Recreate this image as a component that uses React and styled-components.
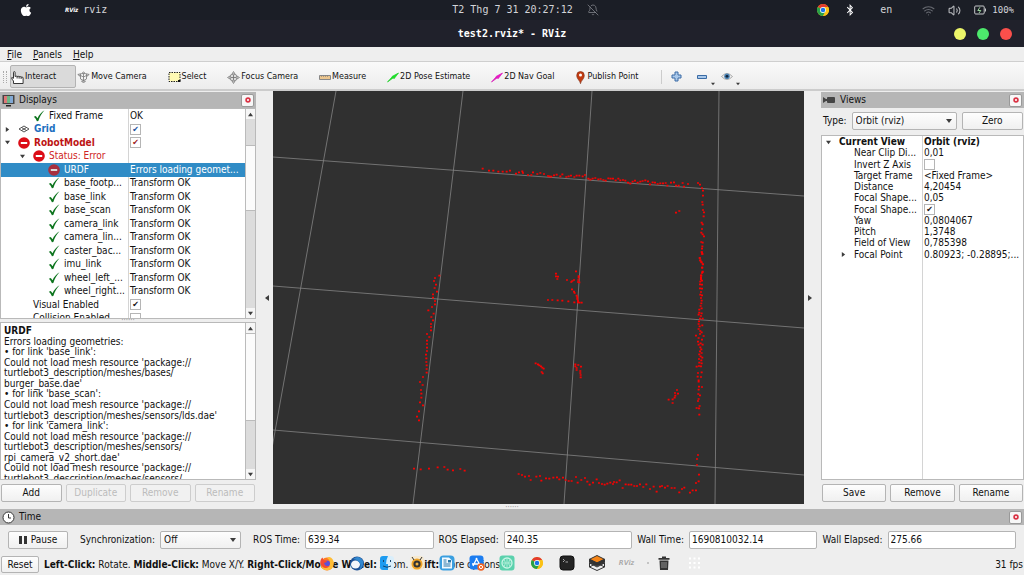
import { useState } from "react";
import styled, { createGlobalStyle } from "styled-components";
import { FaApple, FaBluetoothB } from "react-icons/fa";
import { BellOff, Wifi, Volume2 } from "lucide-react";

const ui = `"DejaVu Sans Condensed", "DejaVu Sans", sans-serif`;

// lidar hits, three units to a pixel
const wallNorth = [
  [68,56],[87,62],[100,62],[115,65],[128,65],[140,65],[150,62],[168,71],[177,67],[187,64],[189,69],[204,75],[214,75],[219,67],[232,72],
  [241,69],[252,72],[264,78],[268,79],[274,80],[282,76],[290,74],[301,79],[307,73],[319,81],[326,79],[333,77],[343,81],[350,77],[358,77],
  [368,79],[375,75],[385,86],[391,89],[398,86],[406,84],[415,88],[422,87],[430,90],[437,92],[445,85],[452,86],[459,86],[467,91],[475,86],
  [481,91],[489,90],[496,92],[504,98],[511,101],[518,95],[525,92],[533,98],[541,95],[548,93],[556,91],[564,94],[570,103],[578,97],[585,98],
  [593,102],[601,100],[609,100],[617,99],[622,107],[633,98],[642,97],[648,107],[656,107],[668,99],[672,110],[684,102],[714,99],[720,104],
  [726,114],[729,122],[729,137],[727,156],[728,164],[729,180],[732,187],[731,199],[725,218],[728,223],[726,237],[724,248],[728,253],[732,259],
  [724,276],[728,278],[727,289],[726,296],[725,306],[727,312],[719,324],[721,331],[725,337],[729,343],[726,353],[728,366],[726,369],[724,377],[723,386],
  [648,188],[658,183],
];

const lidar = [
  [118,77],[105,84],[102,93],[108,104],[104,114],[111,125],[99,133],[99,143],[105,153],[105,163],[96,171],[85,181],[101,191],[94,201],
  [99,211],[93,222],[93,231],[93,241],[81,252],[88,261],[81,272],[81,282],[81,293],[81,303],[78,314],[79,325],[79,336],[80,346],[80,357],
  [80,368],[69,381],[60,396],[68,405],[63,420],[64,431],[64,443],[60,457],[69,466],[57,484],[51,500],[57,511],
  [42,656],[62,658],[87,656],[113,652],[133,651],[143,659],[159,661],[181,657],[194,662],
  [356,672],[366,675],[375,680],[387,678],[392,690],[409,680],[420,678],[424,692],[438,685],[448,686],[460,683],[471,682],[478,688],
  [489,683],[497,690],[506,693],[515,693],[528,681],[533,698],[544,690],[555,684],[562,695],[569,704],[579,698],[590,688],[597,699],
  [606,702],[614,704],[622,701],[631,698],[639,702],[642,696],[650,697],[659,691],[668,714],[677,703],[686,704],[694,704],[703,708],
  [711,708],[720,703],[730,711],[739,703],[750,717],[761,710],[770,725],[780,710],[786,708],[795,713],[803,708],[815,714],[824,714],
  [838,727],[846,717],[853,713],[870,728],[878,721],[888,721],[888,699],[896,694],[897,674],[891,645],[891,627],[894,615],
  [468,71],[468,79],[474,80],[472,87],[501,90],[514,96],[517,93],[522,90],[528,64],[536,78],[536,83],[535,90],[534,96],[538,97],
  [516,118],[522,125],[524,129],[530,137],[532,142],[532,147],[534,152],[534,157],[523,157],[538,158],[545,158],[444,150],[457,150],
  [473,151],[487,152],[505,154],[407,340],[414,343],[418,346],[423,349],[427,353],[431,356],[425,366],[428,370],[526,343],[535,345],
  [526,349],[530,354],[530,360],[543,350],[541,363],[541,369],[542,375],[542,382],[831,420],[825,429],[834,431],[826,437],[824,443],
  [818,448],[806,449],[818,459],
  [906,7],[907,12],[900,24],[901,31],[904,36],[908,42],[907,53],[908,65],[903,76],[903,82],[903,88],[901,95],[906,92],[906,104],[900,103],
  [900,115],[906,116],[903,126],[901,134],[906,136],[903,144],[905,152],[904,160],[902,168],[905,175],[898,179],[898,188],[905,190],
  [896,194],[903,198],[908,206],[900,206],[897,214],[896,222],[899,229],[907,226],[896,237],[901,243],[905,247],[900,252],[888,257],[911,258],
  [896,264],[906,269],[894,275],[902,280],[896,284],[908,284],[901,292],[904,298],[900,304],[905,309],[898,313],[902,319],[907,323],[897,327],
  [904,331],[898,338],[905,340],[897,348],[890,350],[903,349],[894,369],[905,367],[893,380],[903,381],[896,391],[896,395],[906,411],
  [897,410],[896,419],[895,432],[900,436],[896,447],[894,453],[899,468],[890,474],[897,475],[898,494],
];

const displayRows = [
  { depth: 1, icon: "ok", name: "Fixed Frame", value: "OK" },
  { depth: 0, icon: "grid", arrow: "right", name: "Grid", tone: "blue", check: true },
  { depth: 0, icon: "error", arrow: "down", name: "RobotModel", tone: "red", check: true },
  { depth: 1, icon: "error", arrow: "down", name: "Status: Error", tone: "status" },
  { depth: 2, icon: "error", name: "URDF", value: "Errors loading geomet...", selected: true },
  { depth: 2, icon: "ok", name: "base_footp...", value: "Transform OK" },
  { depth: 2, icon: "ok", name: "base_link", value: "Transform OK" },
  { depth: 2, icon: "ok", name: "base_scan", value: "Transform OK" },
  { depth: 2, icon: "ok", name: "camera_link", value: "Transform OK" },
  { depth: 2, icon: "ok", name: "camera_lin...", value: "Transform OK" },
  { depth: 2, icon: "ok", name: "caster_bac...", value: "Transform OK" },
  { depth: 2, icon: "ok", name: "imu_link", value: "Transform OK" },
  { depth: 2, icon: "ok", name: "wheel_left_...", value: "Transform OK" },
  { depth: 2, icon: "ok", name: "wheel_right...", value: "Transform OK" },
  { depth: 1, name: "Visual Enabled", check: true },
  { depth: 1, name: "Collision Enabled", check: false },
];

const viewRows = [
  { depth: 0, arrow: "down", name: "Current View", value: "Orbit (rviz)", tone: "bold" },
  { depth: 1, name: "Near Clip Di...", value: "0,01" },
  { depth: 1, name: "Invert Z Axis", check: false },
  { depth: 1, name: "Target Frame", value: "<Fixed Frame>" },
  { depth: 1, name: "Distance", value: "4,20454" },
  { depth: 1, name: "Focal Shape...", value: "0,05" },
  { depth: 1, name: "Focal Shape...", check: true },
  { depth: 1, name: "Yaw", value: "0,0804067" },
  { depth: 1, name: "Pitch", value: "1,3748" },
  { depth: 1, name: "Field of View", value: "0,785398" },
  { depth: 1, arrow: "right", name: "Focal Point", value: "0.80923; -0.28895;..." },
];

const errorLines = [
  "Errors loading geometries:",
  "• for link 'base_link':",
  "Could not load mesh resource 'package://",
  "turtlebot3_description/meshes/bases/",
  "burger_base.dae'",
  "• for link 'base_scan':",
  "Could not load mesh resource 'package://",
  "turtlebot3_description/meshes/sensors/lds.dae'",
  "• for link 'camera_link':",
  "Could not load mesh resource 'package://",
  "turtlebot3_description/meshes/sensors/",
  "rpi_camera_v2_short.dae'",
  "Could not load mesh resource 'package://",
  "turtlebot3_description/meshes/sensors/",
];

function Arrow({ dir = "down", size = 6 }) {
  const d = { down: "M0 1h6L3 5z", up: "M0 5h6L3 1z", right: "M1 0v6l4-3z", left: "M5 0v6L1 3z" };
  return <svg width={size} height={size} viewBox="0 0 6 6"><path d={d[dir]} fill="#3c3c3c" /></svg>;
}

function StateIcon({ kind, dim }) {
  if (kind === "ok") {
    return <svg width="12" height="12" viewBox="0 0 12 12"><path d="M.8 6.800L2.800 6 4.500 8.200C6 5 8.500 2 11.500.3 8.500 3.500 6.700 7 5.300 11L3.900 11.200C3.200 9.500 2.300 8 .8 6.800z" fill="#0c741d" /></svg>;
  }
  if (kind === "error") {
    return (
      <svg width="12" height="12" viewBox="0 0 12 12">
        <circle cx="6" cy="6" r="5.800" fill={dim ? "#a7303f" : "#dc0d17"} />
        <path d="M2.800 5h6.400v2H2.800z" fill={dim ? "#ddd" : "#fff"} />
      </svg>
    );
  }
  return (
    <svg width="12" height="12" viewBox="0 0 12 12" fill="none" stroke="#444" strokeWidth=".9">
      <path d="M1 6l5-3 5 3-5 3zM3.500 4.500l5 3M8.500 4.500l-5 3" />
    </svg>
  );
}

function Tree({ rows, id, label, split, height }) {
  return (
    <Rows role="tree" aria-label={label} $split={split} $height={height} $count={rows.length}>
      {rows.map((row, i) => (
        <Row key={i} role="treeitem" $split={split} $selected={row.selected} $tone={row.tone}>
          <NameCell $depth={row.depth}>
            <ArrowSlot>{row.arrow && <Arrow dir={row.arrow} size={5} />}</ArrowSlot>
            {row.icon && <StateIcon kind={row.icon} dim={row.selected} />}
            {row.check === undefined ? <span>{row.name}</span> : <label htmlFor={id + i}>{row.name}</label>}
          </NameCell>
          <ValueCell>
            {row.check === undefined
              ? row.value
              : <Tick id={id + i} type="checkbox" defaultChecked={row.check} $tone={row.tone} />}
          </ValueCell>
        </Row>
      ))}
    </Rows>
  );
}

function Scrollbar({ before, thumb, after }) {
  return (
    <Bar>
      <BarButton aria-label="Scroll up"><Arrow dir="up" size={5} /></BarButton>
      <Trough $grow={before} />
      <Thumb $grow={thumb} />
      <Trough $grow={after} />
      <BarButton aria-label="Scroll down"><Arrow dir="down" size={5} /></BarButton>
    </Bar>
  );
}

function DockHeader({ icon, title }) {
  return (
    <Header>
      {icon}
      <h2>{title}</h2>
      <CloseButton aria-label={"Close " + title}>
        <svg width="6" height="6" viewBox="0 0 6 6"><circle cx="3" cy="3" r="1.900" fill="#fff" stroke="#da3345" strokeWidth="1.700" /></svg>
      </CloseButton>
    </Header>
  );
}

function Combo({ id, options }) {
  return (
    <ComboBox>
      <select id={id}>{options.map((o) => <option key={o}>{o}</option>)}</select>
      <Arrow />
    </ComboBox>
  );
}

function Field({ id, label, value }) {
  const [text, setText] = useState(value);
  return (
    <FieldBox>
      <label htmlFor={id}>{label}</label>
      <input id={id} value={text} onChange={(e) => setText(e.target.value)} />
    </FieldBox>
  );
}

function ChromeIcon({ size }) {
  return (
    <svg width={size} height={size} viewBox="0 0 24 24">
      <circle cx="12" cy="12" r="12" fill="#fbc116" />
      <path d="M12 12L1.600 6A12 12 0 0 1 22.400 6z" fill="#e33b2e" />
      <path d="M12 12L1.600 6A12 12 0 0 0 12 24l5.200-9z" fill="#28a148" />
      <path d="M12 6h10.400A12 12 0 0 1 12 24l5.200-9z" fill="#fbc116" />
      <circle cx="12" cy="12" r="5.800" fill="#fff" />
      <circle cx="12" cy="12" r="4.500" fill="#1a73e8" />
    </svg>
  );
}

const toolIcons = {
  interact: (
    <svg width="13" height="13" viewBox="0 0 13 13" fill="#fff" stroke="#222" strokeWidth=".9" strokeLinejoin="round">
      <path d="M2.500 12.500V10L.8 8V6.500l1.700.8V1.500Q2.500.6 3.300.6T4.100 1.500V5.500q1.300-.8 2 0 1.300-.6 2 .2 1.300-.5 2 .3 2-.3 2 1V12.500z" />
      <path d="M6.100 5.500v2M8.100 5.700v2M10.100 6v2" />
    </svg>
  ),
  move: (
    <svg width="13" height="13" viewBox="0 0 13 13" fill="#ddd" stroke="#777" strokeWidth=".8">
      <path d="M6.500 1l2 1.600H4.500zM6.500 12l-2-2h4zM.8 3.500l3-.8-.8 2.500zM12.200 3.500l-3-.8.8 2.500z" />
      <path d="M3 4.200L6.500 6 10 4.200M6.500 2.500V10M3.500 5v3l3 1.500 3-1.500V5" fill="none" />
    </svg>
  ),
  select: (
    <svg width="13" height="12" viewBox="0 0 13 12"><path d="M1 1.500h11v9H1z" fill="#fffab4" stroke="#222" strokeDasharray="1.500 1" /><path d="M10 9h2.500v2H10z" fill="#111" /></svg>
  ),
  focus: (
    <svg width="13" height="13" viewBox="0 0 13 13" fill="#ddd" stroke="#888" strokeWidth=".9">
      <circle cx="6.500" cy="6.500" r="3.600" /><path d="M6.500.5L8 3H5zM6.500 12.500L8 10H5zM.5 6.500L3 5v3zM12.500 6.500L10 5v3z" />
      <path d="M6.500 4v5M4 6.500h5" stroke="#777" />
    </svg>
  ),
  measure: (
    <svg width="12" height="5" viewBox="0 0 12 5"><path d="M.5.5h11v4H.5z" fill="#ecc68f" stroke="#888" /><path d="M2 1.300h8" stroke="#666" strokeDasharray="1 1" strokeWidth=".6" /></svg>
  ),
  pose: <svg width="12" height="11" viewBox="0 0 12 11"><path d="M.5 10L5 5l1 1zM5 4.500L11.500 1 7 6.800z" fill="#19e626" stroke="#19d022" strokeWidth=".7" /></svg>,
  nav: <svg width="12" height="11" viewBox="0 0 12 11"><path d="M.5 10L5 5l1 1zM5 4.500L11.500 1 7 6.800z" fill="#ef12ca" stroke="#d516b4" strokeWidth=".7" /></svg>,
  point: (
    <svg width="11" height="13" viewBox="0 0 11 13"><path d="M5.500 12.700C5 9.500 1.700 8 1.700 4.500a3.800 4 0 0 1 7.600 0C9.300 8 6 9.500 5.500 12.700z" fill="#c23c12" stroke="#7c2b12" strokeWidth=".6" /><circle cx="5.500" cy="4" r="1.500" fill="#fff" /></svg>
  ),
};

const tools = [
  ["interact", "Interact"], ["move", "Move Camera"], ["select", "Select"], ["focus", "Focus Camera"],
  ["measure", "Measure"], ["pose", "2D Pose Estimate"], ["nav", "2D Nav Goal"], ["point", "Publish Point"],
];

const apps = [
  ["Firefox", <svg viewBox="0 0 16 16"><circle cx="8" cy="9" r="6.500" fill="#ff7b22" /><path d="M8 3c3-3 8 2 6.500 7A6.500 6.500 0 0 1 2 11c4 4 9 1 9-3 0-2-1-4-3-5z" fill="#ffbd35" /><circle cx="8" cy="8.500" r="3" fill="#5b51d8" /><path d="M1.500 9C.8 6 2 3.500 3.500 2.500L4.500 5 7 5.500 8 7 5 8q1 4 6 3-5 5-9.500-2z" fill="#f44b33" /></svg>],
  ["Thunderbird", <svg viewBox="0 0 16 16"><circle cx="8" cy="8.500" r="7" fill="#1c4f93" /><ellipse cx="6.500" cy="9.500" rx="4.500" ry="4" fill="#f4f6fa" /><path d="M4 4q6-5 10 2 1 6-4 9 3-5 0-8-3-3-6-3z" fill="#3288cf" /></svg>],
  ["Files", <svg viewBox="0 0 16 16"><rect x="1" y="1" width="14" height="14" rx="3" fill="#d9eefb" /><path d="M4 1h5Q7 5 7 9h2v6H4q-3 0-3-3V4q0-3 3-3z" fill="#1d9bf0" /><path d="M4.500 5v2M11.500 5v2M4 11q4 2.500 8 0" stroke="#17466e" fill="none" /></svg>],
  ["Rhythmbox", <svg viewBox="0 0 16 16"><rect x="1" y="1" width="14" height="14" rx="4" fill="#f6e9cf" /><circle cx="8" cy="9" r="5.500" fill="#f0a426" /><circle cx="8" cy="9" r="3.600" fill="#333" /><circle cx="8" cy="9" r="1.500" fill="#f3b544" /><path d="M3 2l2 3M13 2l-2 3" stroke="#333" /></svg>],
  ["Writer", <svg viewBox="0 0 16 16"><rect x=".5" y=".5" width="15" height="15" rx="4" fill="#3a9fe0" /><path d="M3 2.500h7l3 3v8H3z" fill="#f2faff" /><path d="M4.500 5h3M4.500 7h3M4.500 9h7M4.500 11h7" stroke="#2876a8" /><path d="M9 5h3v2.500H9z" fill="#2876a8" /></svg>],
  ["Software", <svg viewBox="0 0 16 16"><rect x=".5" y=".5" width="14" height="14" rx="3" fill="#1c7df0" /><path d="M8 3L4 11M7 3l4 7M3 9h8" stroke="#fff" strokeWidth="1.300" /><circle cx="12" cy="12" r="3.700" fill="#ef6527" /><circle cx="12" cy="12" r="1.600" fill="none" stroke="#fff" /></svg>],
  ["Assistant", <svg viewBox="0 0 16 16"><rect x=".5" y=".5" width="15" height="15" rx="3" fill="#5bd1ad" /><circle cx="8" cy="8" r="5" fill="none" stroke="#c9f5e6" strokeWidth="1.300" /><path d="M8 3v10M3 8h10M5 4q3 4 0 8M11 4q-3 4 0 8" stroke="#a9ecd5" fill="none" /></svg>],
  ["Chrome", <ChromeIcon size={12} />],
  ["Terminal", <svg viewBox="0 0 16 16"><rect x="1" y="1" width="14" height="14" rx="3" fill="#242424" stroke="#111" /><path d="M4 4l1.500 1.500L4 7M6.500 7H9" stroke="#ccc" strokeWidth=".8" fill="none" /></svg>],
  ["Layers", <svg viewBox="0 0 16 16" strokeLinejoin="round"><path d="M.5 8v4L8 15.500l7.500-3.500V8L8 12z" fill="#eee" stroke="#333" /><path d="M.5 12l7.500-4 7.500 4" stroke="#333" fill="none" /><path d="M8 .5l7.500 3.800L8 8 .5 4.300z" fill="#f58416" stroke="#333" /><path d="M.5 4.300v3.200L8 11l7.500-3.500V4.300L8 8z" fill="#333" stroke="#333" /></svg>],
  ["RViz", <small>RViz</small>],
];

function Viewport() {
  return (
    <Canvas viewBox="273 91 531 413" preserveAspectRatio="xMidYMid slice" role="img" aria-label="3D view">
      <g stroke="#848484" strokeWidth=".8">
        <path d="M273 157L804 196M273 286L804 328M273 430L804 475" />
        <path d="M336 91L262 504M463 91L413 504M592 91L564 504M719 91L715 504" />
      </g>
      <g stroke="#f70000" strokeWidth="5" fill="none">
        <path transform="translate(460 150) scale(.3333)" d={wallNorth.map(([x, y]) => `M${x - 3} ${y}h6`).join("")} />
        <path transform="translate(400 250) scale(.3333)" d={lidar.map(([x, y]) => `M${x - 3} ${y}h6`).join("")} />
      </g>
    </Canvas>
  );
}

export default function App() {
  const [tool, setTool] = useState("interact");

  return (
    <Screen>
      <GlobalStyle />

      <TopBar>
        <TopLeft>
          <FaApple size={14} color="#fff" />
          <AppName><small>RViz</small>rviz</AppName>
        </TopLeft>
        <Clock>T2 Thg 7 31 20:27:12 <BellOff size={12} strokeWidth={1.5} color="#85888f" /></Clock>
        <Tray>
          <ChromeIcon size={12} />
          <FaBluetoothB size={12} color="#fff" />
          <Lang>en</Lang>
          <Wifi size={13} color="#686b72" />
          <Volume2 size={13} color="#b5b7bb" />
          <Battery>
            <svg width="12" height="10" viewBox="0 0 12 10" fill="none" stroke="#c5c7ca">
              <rect x=".7" y="1" width="9.500" height="8" rx="1" /><path d="M11.500 3.500v3" /><path d="M6 2.200L3.800 5.500h3L5 8" stroke="#9bd39b" />
            </svg>
            100%
          </Battery>
        </Tray>
      </TopBar>

      <TitleBar>
        <h1>test2.rviz* - RViz</h1>
        <Lights>
          <Light $color="#ecf569" aria-label="Minimize" />
          <Light $color="#4de96c" aria-label="Maximize" />
          <Light $color="#fa4f4b" aria-label="Close" />
        </Lights>
      </TitleBar>

      <MenuBar>
        <button><u>F</u>ile</button>
        <button><u>P</u>anels</button>
        <button><u>H</u>elp</button>
      </MenuBar>

      <ToolBar>
        <Grip />
        {tools.map(([key, label]) => (
          <Tool key={key} $active={tool === key} onClick={() => setTool(key)}>{toolIcons[key]}{label}</Tool>
        ))}
        <Divider />
        <IconTool aria-label="Add tool">
          <svg width="11" height="11" viewBox="0 0 11 11"><path d="M4 1h3v3h3v3H7v3H4V7H1V4h3z" fill="#a9c8ea" stroke="#3a6ba5" /></svg>
        </IconTool>
        <IconTool aria-label="Remove tool">
          <svg width="10" height="4" viewBox="0 0 10 4"><path d="M.5.5h9v3h-9z" fill="#a9c8ea" stroke="#3a6ba5" /></svg>
          <DropMark><Arrow size={4} /></DropMark>
        </IconTool>
        <IconTool aria-label="Visibility">
          <svg width="12" height="9" viewBox="0 0 12 9"><path d="M.5 4.500Q6-1.500 11.500 4.500 6 10.500.5 4.500z" fill="#eee" stroke="#999" strokeWidth=".8" /><circle cx="6" cy="4.300" r="2.800" fill="#4c84b4" /><circle cx="6" cy="4.300" r="1.400" fill="#10233a" /></svg>
          <DropMark><Arrow size={4} /></DropMark>
        </IconTool>
      </ToolBar>

      <Main>
        <LeftDock>
          <DockHeader
            title="Displays"
            icon={
              <svg width="13" height="13" viewBox="0 0 13 13">
                <path d="M.5 1h12v9H.5z" fill="#444" /><path d="M2 2h3v7H2z" fill="#d77" /><path d="M5 2h3v7H5z" fill="#6ab787" /><path d="M8 2h3v7H8z" fill="#82a9d5" /><path d="M4 11h5v1.500H4z" fill="#222" />
              </svg>
            }
          />
          <Panel $grow={211}>
            <Tree rows={displayRows} id="display" label="Displays" split={127} height={216} />
            <Scrollbar before={26} thumb={65} after={99} />
          </Panel>
          <Splitter>······</Splitter>
          <Panel $grow={157}>
            <Report>
              <b>URDF</b>
              {errorLines.map((line, i) => <span key={i}>{line}</span>)}
            </Report>
            <Scrollbar before={0} thumb={87} after={48} />
          </Panel>
          <Actions>
            <Button>Add</Button>
            <Button disabled>Duplicate</Button>
            <Button disabled>Remove</Button>
            <Button disabled>Rename</Button>
          </Actions>
        </LeftDock>

        <Handle $side="left" aria-label="Hide left dock"><Arrow dir="left" /></Handle>
        <Viewport />
        <Handle $side="right" aria-label="Hide right dock"><Arrow dir="right" /></Handle>

        <RightDock>
          <DockHeader
            title="Views"
            icon={<svg width="13" height="8" viewBox="0 0 13 8"><path d="M0 1l3 2h1V2q0-1 1-1h6q1 0 1 1v4q0 1-1 1H5Q4 7 4 6V5H3L0 7z" fill="#454545" /></svg>}
          />
          <TypeRow>
            <label htmlFor="view-type">Type:</label>
            <Combo id="view-type" options={["Orbit (rviz)", "FPS (rviz)", "TopDownOrtho (rviz)"]} />
            <Button>Zero</Button>
          </TypeRow>
          <Panel $grow={1}>
            <Tree rows={viewRows} id="view" label="Views" split={100} height={124} />
          </Panel>
          <Actions>
            <Button>Save</Button>
            <Button>Remove</Button>
            <Button>Rename</Button>
          </Actions>
        </RightDock>
      </Main>

      <Splitter>······</Splitter>
      <DockHeader
        title="Time"
        icon={<svg width="13" height="13" viewBox="0 0 13 13" fill="#fff" stroke="#333"><circle cx="6.500" cy="6.500" r="5.500" /><path d="M6.500 3v4H9" fill="none" /></svg>}
      />
      <TimeRow>
        <Button>
          <svg width="8" height="8" viewBox="0 0 8 8"><path d="M0 0h3v8H0zM5 0h3v8H5z" fill="#333" /></svg>
          Pause
        </Button>
        <label htmlFor="sync">Synchronization:</label>
        <Combo id="sync" options={["Off", "Exact", "Approximate"]} />
        <Fields>
          <Field id="ros-time" label="ROS Time:" value="639.34" />
          <Field id="ros-elapsed" label="ROS Elapsed:" value="240.35" />
          <Field id="wall-time" label="Wall Time:" value="1690810032.14" />
          <Field id="wall-elapsed" label="Wall Elapsed:" value="275.66" />
        </Fields>
      </TimeRow>

      <StatusBar>
        <Button>Reset</Button>
        <p><b>Left-Click:</b> Rotate. <b>Middle-Click:</b> Move X/Y. <b>Right-Click/Mouse Wheel:</b> Zoom. <b>Shift:</b> More options.</p>
        <span>31 fps</span>
      </StatusBar>

      <Launcher>
        {apps.map(([name, icon]) => <AppButton key={name} aria-label={name}>{icon}</AppButton>)}
        <LauncherDot />
        <AppButton aria-label="Trash">
          <svg viewBox="0 0 16 16"><path d="M2.500 3h11v1.800h-11zM6 1.500h4V3H6zM3.500 5.500h9L12 15H4z" fill="#333" /><path d="M6 7v6M8 7v6M10 7v6" stroke="#aaa" strokeWidth=".8" /></svg>
        </AppButton>
        <AppButton aria-label="Show applications">
          <svg viewBox="0 0 16 16"><path d="M3 3.500h11M3 8h11M3 12.500h11" stroke="#fff" strokeWidth="2" strokeDasharray="2 2.500" /></svg>
        </AppButton>
      </Launcher>
    </Screen>
  );
}

const GlobalStyle = createGlobalStyle`

*{
    box-sizing:border-box;
}

body{
    margin:0;
    font-family:${ui};
    font-size:10px;
    line-height:12px;
    color:#111;
    background:#eee;
}

button, input, select{
    font:inherit;
    color:inherit;
    margin:0;
}

h1, h2, p{
    margin:0;
    font-size:inherit;
}

svg{
    flex:none;
    display:block;
}

`;

const Screen = styled.div`

position:relative;
display:flex;
flex-direction:column;
min-height:100vh;
overflow:hidden;

`;

const TopBar = styled.header`

display:grid;
grid-template-columns:1fr auto 1fr;
align-items:center;
height:20px;
padding:0 10px 0 19px;
background:#1b1e26;
color:#d3d4d8;
font-family:"DejaVu Sans Mono", monospace;

`;

const TopLeft = styled.div`

display:flex;
align-items:center;
gap:32px;

`;

const AppName = styled.div`

display:flex;
align-items:center;
gap:5px;

small{
    font:italic bold 6px/8px ${ui};
    color:#fff;
}

`;

const Clock = styled.div`

display:flex;
align-items:center;
gap:14px;
padding-left:18px;

`;

const Tray = styled.div`

display:flex;
align-items:center;
justify-content:flex-end;
gap:13px;

> svg:first-child{
    margin-right:2px;
}

`;

const Lang = styled.span`

padding:0 17px 0 11px;

`;

const Battery = styled.div`

display:flex;
align-items:center;
gap:6px;
font-size:9px;

`;

const TitleBar = styled.div`

display:grid;
grid-template-columns:1fr auto 1fr;
align-items:center;
height:27px;
padding:0 12px;
background:#20212b;
color:#fff;
font-family:"DejaVu Sans Mono", monospace;

h1{
    grid-column:2;
}

`;

const Lights = styled.div`

display:flex;
justify-content:flex-end;
gap:11px;

`;

const Light = styled.button`

width:12px;
height:12px;
padding:0;
border:0;
border-radius:50%;
background:${(p) => p.$color};

`;

const MenuBar = styled.nav`

display:flex;
gap:11px;
height:15px;
padding:1px 7px 0;
border-bottom:1px solid #cfcfcf;

button{
    padding:0;
    border:0;
    background:none;
}

u{
    text-underline-offset:1px;
}

`;

const ToolBar = styled.div`

display:flex;
align-items:center;
height:29px;
padding:2px 3px 0;
background:linear-gradient(#fafafa, #ececec);
border-bottom:2px solid #ccc;
font-family:"DejaVu Sans", sans-serif;
font-size:8px;

`;

const Grip = styled.div`

width:4px;
height:12px;
margin-right:3px;
border-left:1px dotted #aaa;
border-right:1px dotted #aaa;

`;

const Tool = styled.button`

display:flex;
align-items:center;
gap:1px;
height:23px;
padding:1px 19px 0 0;
border:1px solid ${(p) => (p.$active ? "#b3b3b3" : "transparent")};
border-radius:2px;
background:${(p) => (p.$active ? "#dadada" : "none")};
white-space:nowrap;

`;

const Divider = styled.div`

width:1px;
height:14px;
margin:0 6px 0 3px;
background:#ccc;

`;

const IconTool = styled.button`

position:relative;
display:grid;
place-items:center;
width:25px;
height:22px;
padding:0 8px 0 0;
border:0;
background:none;

`;

const DropMark = styled.span`

position:absolute;
right:3px;
bottom:2px;

`;

const Main = styled.main`

display:flex;
flex:1 1 0;
height:0;
padding-bottom:2px;

`;

const LeftDock = styled.section`

display:flex;
flex-direction:column;
width:25%;
padding-top:1px;

`;

const RightDock = styled.section`

display:flex;
flex-direction:column;
width:203px;
padding-top:1px;

`;

const Header = styled.div`

display:flex;
align-items:center;
gap:4px;
flex:none;
height:16px;
padding:0 2px;
background:#b6b6b6;

h2{
    flex:1;
    font-weight:normal;
}

`;

const CloseButton = styled.button`

display:grid;
place-items:center;
width:13px;
height:13px;
padding:0;
border:1px solid #999;
border-radius:2px;
background:#f7f7f7;

`;

const Panel = styled.div`

display:flex;
flex:${(p) => p.$grow} 1 0;
min-height:0;
overflow:hidden;
border:1px solid #b9b9b9;
background:#fff;

`;

const Rows = styled.div`

flex:1;
display:grid;
grid-template-rows:repeat(${(p) => p.$count}, calc(${(p) => p.$height}px / ${(p) => p.$count}));
height:100%;
overflow:hidden;
background:linear-gradient(#d4d4d4, #d4d4d4) ${(p) => p.$split}px 0 / 1px 100% no-repeat;

`;

const Row = styled.div`

display:grid;
grid-template-columns:${(p) => p.$split}px 1fr;
align-items:center;
white-space:nowrap;
background:${(p) => (p.$selected ? "#308cc6" : "none")};
color:${(p) => (p.$selected ? "#fff" : { blue: "#1b6fc0", red: "#bd1414", status: "#cf2323" }[p.$tone] || "#111")};
font-weight:${(p) => (["blue", "red", "bold"].includes(p.$tone) ? "bold" : "normal")};

`;

const NameCell = styled.div`

display:flex;
align-items:center;
gap:4px;
padding-left:${(p) => p.$depth * 15}px;

`;

const ArrowSlot = styled.span`

display:grid;
place-items:center;
width:13px;

`;

const ValueCell = styled.div`

display:flex;
align-items:center;
padding-left:2px;

`;

const Tick = styled.input`

appearance:none;
display:grid;
place-items:center;
width:11px;
height:11px;
border:1px solid #b5b5b5;
background:#fff;

&:checked::before{
    content:"✔";
    font:8px/9px "DejaVu Sans", sans-serif;
    color:${(p) => ({ blue: "#134f9b", red: "#9d1b1b" }[p.$tone] || "#111")};
}

`;

const Bar = styled.div`

display:flex;
flex-direction:column;
width:10px;
background:#dcdcdc;
border-left:1px solid #bbb;

`;

const BarButton = styled.button`

display:grid;
place-items:center;
height:10px;
padding:0;
border:0;
background:#f6f6f6;

`;

const Trough = styled.div`

flex:${(p) => p.$grow} 1 0;

`;

const Thumb = styled.div`

flex:${(p) => p.$grow} 1 0;
border:solid #bbb;
border-width:1px 0;
background:#fbfbfb;

`;

const Splitter = styled.div`

flex:none;
height:3px;
font-size:8px;
line-height:3px;
text-align:center;
color:#999;

`;

const Report = styled.div`

flex:1;
display:grid;
grid-template-rows:repeat(15, 1fr);
height:160px;
padding:2px 3px 0;
white-space:nowrap;

> *{
    line-height:11px;
    min-height:0;
}

`;

const Actions = styled.div`

display:flex;
gap:4px;
flex:none;
padding:4px 1px 2px;

> button{
    flex:1 1 0;
}

`;

const Button = styled.button`

display:flex;
align-items:center;
justify-content:center;
gap:4px;
height:18px;
padding:0 6px;
border:1px solid #b4b4b4;
border-radius:2px;
background:linear-gradient(#fdfdfd, #f0f0f0);

&:disabled{
    color:#bcbcbc;
    border-color:#cdcdcd;
    background:#f1f1f1;
}

`;

const Handle = styled.button`

width:17px;
display:grid;
place-items:center;
padding:${(p) => (p.$side === "left" ? "0 0 0 5px" : "0 5px 0 0")};
border:0;
background:#eee;

`;

const Canvas = styled.svg`

flex:1 1 0;
min-width:0;
height:100%;
background:#303030;

`;

const TypeRow = styled.div`

display:grid;
grid-template-columns:auto 105px 1fr;
align-items:center;
gap:5px;
padding:4px 1px 5px 2px;

`;

const ComboBox = styled.div`

display:grid;
align-items:center;

select, svg{
    grid-area:1 / 1;
}

select{
    appearance:none;
    width:100%;
    height:18px;
    padding:0 3px;
    border:1px solid #b4b4b4;
    border-radius:2px;
    background:linear-gradient(#fdfdfd, #f0f0f0);
}

svg{
    justify-self:end;
    margin-right:5px;
    pointer-events:none;
}

`;

const TimeRow = styled.div`

display:flex;
align-items:center;
height:29px;
padding:0 8px;

> button{
    width:60px;
    margin-right:12px;
}

> div:nth-of-type(1){
    width:81px;
    margin:0 12px 0 5px;
}

`;

const Fields = styled.div`

flex:1;
display:flex;
gap:5px;

`;

const FieldBox = styled.div`

display:flex;
align-items:center;
gap:5px;
flex:1 1 auto;
white-space:nowrap;

input{
    flex:1;
    width:0;
    min-width:128px;
    height:18px;
    padding:0 2px;
    border:1px solid #b4b4b4;
    border-radius:2px;
    background:#fff;
}

`;

const StatusBar = styled.footer`

display:flex;
align-items:center;
gap:5px;
height:21px;
padding:0 1px;

button{
    width:38px;
    height:17px;
}

p{
    flex:1;
}

`;

const Launcher = styled.div`

position:absolute;
left:0;
right:0;
bottom:4px;
display:flex;
align-items:center;
justify-content:center;
gap:14px;
padding-right:4px;

`;

const AppButton = styled.button`

display:grid;
place-items:center;
width:16px;
height:16px;
padding:0;
border:0;
background:none;

svg{
    max-width:16px;
    max-height:16px;
}

small{
    font:italic bold 7px/8px ${ui};
    color:#aaa;
    text-shadow:0 0 1px #fff;
}

`;

const LauncherDot = styled.span`

width:7px;
height:2px;
margin:0 -7px;
border-right:2px solid #c4c4c4;

`;
